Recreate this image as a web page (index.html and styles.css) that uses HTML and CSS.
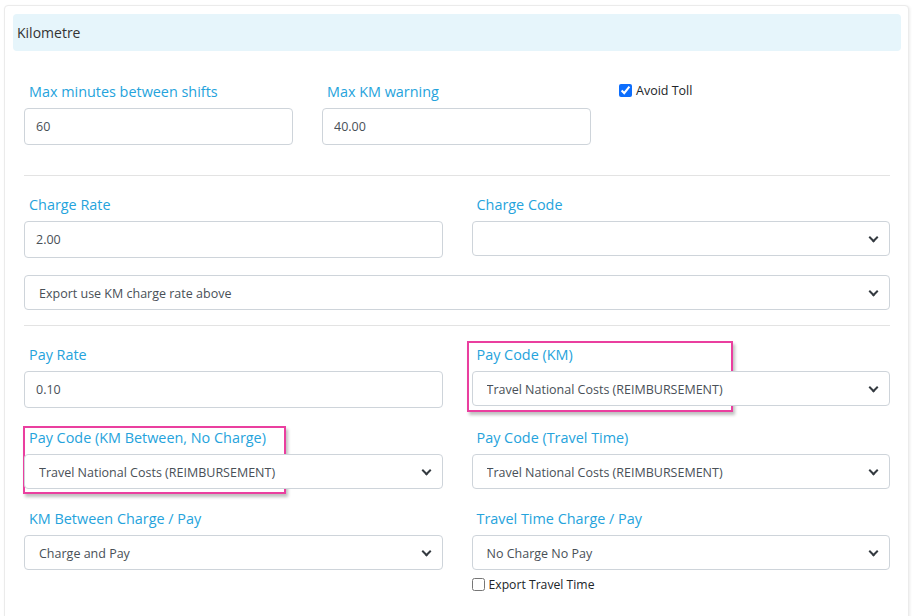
FILE: index.html
```html
<!DOCTYPE html>
<html lang="en">
  <head>
    <meta charset="UTF-8" />
    <meta name="viewport" content="width=device-width, initial-scale=1.0" />
    <title>Kilometre settings</title>
    <link rel="stylesheet" href="styles.css">
  </head>
  <body>
    <div class="card">
      <div class="card-header">Kilometre</div>

      <!-- Shift limits -->
      <div class="section section-top">
        <div class="grid grid-three">
          <div class="field">
            <label class="field-label">Max minutes between shifts</label>
            <input class="control" type="text" value="60" />
          </div>
          <div class="field">
            <label class="field-label">Max KM warning</label>
            <input class="control" type="text" value="40.00" />
          </div>
          <div class="field">
            <label class="check">
              <input type="checkbox" checked />
              <span>Avoid Toll</span>
            </label>
          </div>
        </div>
      </div>

      <!-- Charging -->
      <div class="section">
        <div class="grid grid-two">
          <div class="field">
            <label class="field-label">Charge Rate</label>
            <input class="control" type="text" value="2.00" />
          </div>
          <div class="field">
            <label class="field-label">Charge Code</label>
            <div class="select-wrap">
              <select class="control select">
                <option></option>
              </select>
            </div>
          </div>
        </div>
        <div class="select-wrap full">
          <select class="control select">
            <option>Export use KM charge rate above</option>
          </select>
        </div>
      </div>

      <!-- Paying -->
      <div class="section section-last">
        <div class="grid grid-two">
          <div class="field">
            <label class="field-label">Pay Rate</label>
            <input class="control" type="text" value="0.10" />
          </div>
          <div class="field">
            <div class="highlight highlight-km"></div>
            <label class="field-label">Pay Code (KM)</label>
            <div class="select-wrap">
              <select class="control select">
                <option>Travel National Costs (REIMBURSEMENT)</option>
              </select>
            </div>
          </div>
          <div class="field">
            <div class="highlight highlight-between"></div>
            <label class="field-label">Pay Code (KM Between, No Charge)</label>
            <div class="select-wrap">
              <select class="control select">
                <option>Travel National Costs (REIMBURSEMENT)</option>
              </select>
            </div>
          </div>
          <div class="field">
            <label class="field-label">Pay Code (Travel Time)</label>
            <div class="select-wrap">
              <select class="control select">
                <option>Travel National Costs (REIMBURSEMENT)</option>
              </select>
            </div>
          </div>
          <div class="field">
            <label class="field-label">KM Between Charge / Pay</label>
            <div class="select-wrap">
              <select class="control select">
                <option>Charge and Pay</option>
              </select>
            </div>
          </div>
          <div class="field">
            <label class="field-label">Travel Time Charge / Pay</label>
            <div class="select-wrap">
              <select class="control select">
                <option>No Charge No Pay</option>
              </select>
            </div>
            <label class="check check-below">
              <input type="checkbox" />
              <span>Export Travel Time</span>
            </label>
          </div>
        </div>
      </div>
    </div>
  </body>
</html>
```

FILE: styles.css
```css
* {
  margin: 0;
  padding: 0;
  box-sizing: border-box;
}

body {
  font-family: "Open Sans", "Noto Sans", sans-serif;
  background: #ffffff;
  color: #212529;
  overflow: hidden;
}

.card {
  margin: 5px 0 0 4px;
  width: 905px;
  height: 640px;
  padding: 8px 7px 0 8px;
  background: #ffffff;
  border: 1px solid #ebebeb;
  border-radius: 4px;
  box-shadow: 1px 1px 3px rgba(0, 0, 0, 0.08);
}

.card-header {
  height: 37px;
  padding: 0 0 0 4px;
  display: flex;
  align-items: center;
  background: #e6f5fb;
  border-radius: 4px;
  font-size: 14px;
  color: #333333;
}

.section {
  margin: 0 11px;
  padding: 19px 0 15px;
  border-bottom: 1px solid #e3e3e3;
}

.section-top {
  padding: 31px 0 30px;
}

.section-last {
  border-bottom: none;
}

.grid {
  display: grid;
  column-gap: 29px;
}

.grid-three {
  grid-template-columns: 269px 269px 1fr;
}

.grid-two {
  grid-template-columns: 1fr 1fr;
  row-gap: 20px;
}

.field {
  position: relative;
}

.field-label {
  display: block;
  height: 20px;
  line-height: 20px;
  padding-left: 5px;
  margin-bottom: 6px;
  font-size: 14.4px;
  color: #25a3dc;
}

.control {
  display: block;
  width: 100%;
  height: 37px;
  padding: 0 11px;
  font-family: inherit;
  font-size: 12.5px;
  color: #495057;
  background: #ffffff;
  border: 1px solid #ced4da;
  border-radius: 4px;
  outline: none;
}

.select-wrap {
  position: relative;
}

.select-wrap.full {
  margin-top: 17px;
}

.select-wrap::after {
  content: "";
  position: absolute;
  right: 13px;
  top: 13px;
  width: 5px;
  height: 5px;
  border-right: 2px solid #343a40;
  border-bottom: 2px solid #343a40;
  transform: rotate(45deg);
  pointer-events: none;
}

.select {
  height: 35px;
  padding: 1px 30px 0 14px;
  appearance: none;
  -webkit-appearance: none;
}

.check {
  display: flex;
  align-items: center;
  gap: 4px;
  font-size: 12.5px;
  color: #212529;
}

.check input {
  width: 13px;
  height: 13px;
  margin: 0 0 0 -1px;
  accent-color: #0d6efd;
}

.check-below {
  margin-top: 6px;
  padding-left: 1px;
  font-size: 12.2px;
}

/* Annotation boxes drawn over the screenshot */
.highlight {
  position: absolute;
  border: 2px solid #ea3f9f;
  box-shadow: 2px 3px 3px rgba(0, 0, 0, 0.25);
  pointer-events: none;
}

.highlight-km {
  left: -5px;
  top: -4px;
  width: 266px;
  height: 71px;
}

.highlight-between {
  left: -1px;
  top: -2px;
  width: 263px;
  height: 68px;
}
```
